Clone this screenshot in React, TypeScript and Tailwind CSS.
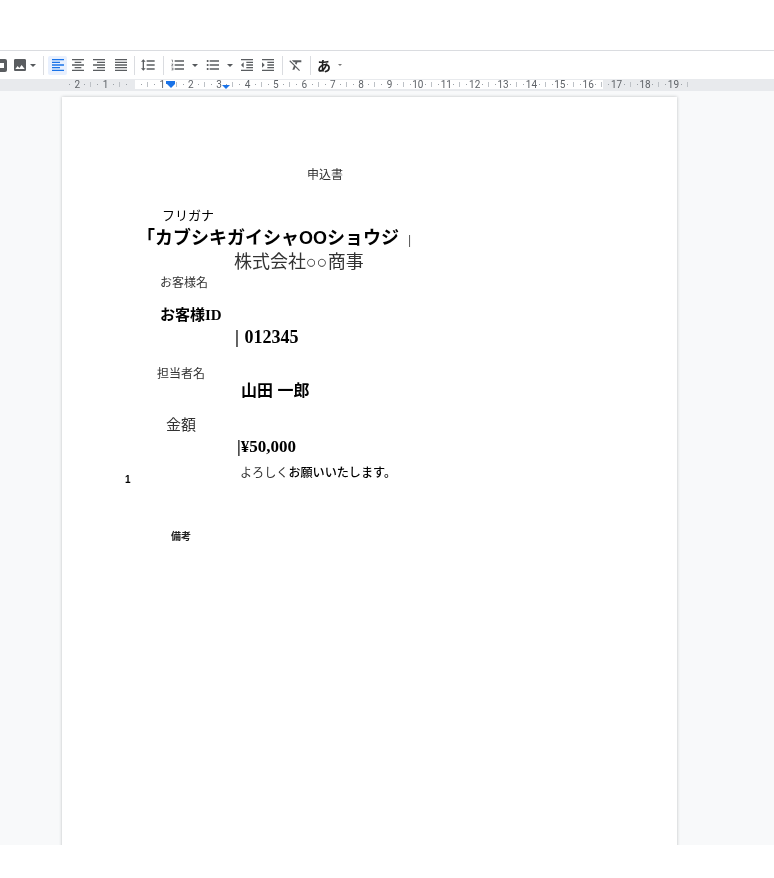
const paths = {
  image:
    "M21 19V5c0-1.1-.9-2-2-2H5c-1.1 0-2 .9-2 2v14c0 1.1.9 2 2 2h14c1.1 0 2-.9 2-2zM8.5 13.5l2.5 3.01L14.5 12l4.5 6H5l3.5-4.5z",
  left: "M15 15H3v2h12v-2zm0-8H3v2h12V7zM3 13h18v-2H3v2zm0 8h18v-2H3v2zM3 3v2h18V3H3z",
  center: "M7 15v2h10v-2H7zm-4 6h18v-2H3v2zm0-8h18v-2H3v2zm4-6v2h10V7H7zM3 3v2h18V3H3z",
  right: "M3 21h18v-2H3v2zm6-4h12v-2H9v2zm-6-4h18v-2H3v2zm6-4h12V7H9v2zM3 3v2h18V3H3z",
  justify: "M3 21h18v-2H3v2zm0-4h18v-2H3v2zm0-4h18v-2H3v2zm0-4h18V7H3v2zm0-6v2h18V3H3z",
  spacing: "M6 7h2.5L5 3.5 1.5 7H4v10H1.5L5 20.5 8.5 17H6V7zm4-2v2h12V5H10zm0 14h12v-2H10v2zm0-6h12v-2H10v2z",
  numbered:
    "M2 17h2v.5H3v1h1v.5H2v1h3v-4H2v1zm1-9h1V4H2v1h1v3zm-1 3h1.8L2 13.1v.9h3v-1H3.2L5 10.9V10H2v1zm5-6v2h14V5H7zm0 14h14v-2H7v2zm0-6h14v-2H7v2z",
  bulleted:
    "M4 10.5c-.83 0-1.5.67-1.5 1.5s.67 1.5 1.5 1.5 1.5-.67 1.5-1.5-.67-1.5-1.5-1.5zm0-6c-.83 0-1.5.67-1.5 1.5S3.17 7.5 4 7.5 5.5 6.83 5.5 6 4.83 4.5 4 4.5zm0 12c-.83 0-1.5.68-1.5 1.5s.68 1.5 1.5 1.5 1.5-.68 1.5-1.5-.67-1.5-1.5-1.5zM7 19h14v-2H7v2zm0-6h14v-2H7v2zm0-8v2h14V5H7z",
  outdent: "M11 17h10v-2H11v2zm-8-5l4 4V8l-4 4zm0 9h18v-2H3v2zM3 3v2h18V3H3zm8 6h10V7H11v2zm0 4h10v-2H11v2z",
  indent: "M3 21h18v-2H3v2zM3 8v8l4-4-4-4zm8 9h10v-2H11v2zM3 3v2h18V3H3zm8 6h10V7H11v2zm0 4h10v-2H11v2z",
  clear: "M3.27 5L2 6.27l6.97 6.97L6.5 19h3l1.57-3.66L16.73 21 18 19.73 3.55 5.27 3.27 5zM6 5v.18L8.82 8h2.4l-.72 1.68 2.1 2.1L14.21 8H20V5H6z",
};

const Icon = ({ d, className = "" }: { d: string; className?: string }) => (
  <svg viewBox="0 0 24 24" className={`h-4 w-4 shrink-0 fill-[#5a5d60] ${className}`}>
    <path d={d} />
  </svg>
);

const Caret = ({ className = "" }: { className?: string }) => (
  <span className={`flex h-4 w-[10px] shrink-0 items-center justify-center ${className}`}>
    <span className="h-0 w-0 border-x-[3px] border-t-[3px] border-x-transparent border-t-[#55585c]" />
  </span>
);

const Sep = ({ className = "" }: { className?: string }) => (
  <span className={`h-[19px] w-px shrink-0 bg-[#dadce0] ${className}`} />
);

const ruler = ["2", "1", "", "1", "2", "3", "4", "5", "6", "7", "8", "9", "10", "11", "12", "13", "14", "15", "16", "17", "18", "19"];

const Toolbar = () => (
  <div className="flex h-[28px] items-center overflow-hidden bg-white blur-[0.4px]">
    <span className="flex h-4 w-[7px] shrink-0 items-center justify-end overflow-hidden">
      <span className="flex h-[13px] w-[13px] shrink-0 items-center justify-center rounded-[2px] bg-[#5a5d60]">
        <span className="h-[5px] w-[7px] bg-white" />
      </span>
    </span>
    <Icon d={paths.image} className="ml-[5px]" />
    <Caret />
    <Sep className="ml-[5px]" />
    <span className="ml-[4px] flex h-[19px] w-[19px] shrink-0 items-center justify-center rounded-[2px] bg-[#e8f0fe]">
      <svg viewBox="0 0 24 24" className="h-4 w-4 fill-[#1a73e8]">
        <path d={paths.left} />
      </svg>
    </span>
    <span className="flex h-4 w-[21px] shrink-0 justify-center"><Icon d={paths.center} /></span>
    <span className="flex h-4 w-[22px] shrink-0 justify-center"><Icon d={paths.right} /></span>
    <span className="flex h-4 w-[21px] shrink-0 justify-center"><Icon d={paths.justify} /></span>
    <Sep className="ml-[3px]" />
    <Icon d={paths.spacing} className="ml-[5px]" />
    <Sep className="ml-[7px]" />
    <Icon d={paths.numbered} className="ml-[6px]" />
    <Caret className="ml-[4px]" />
    <Icon d={paths.bulleted} className="ml-[5px]" />
    <Caret className="ml-[4px]" />
    <Icon d={paths.outdent} className="ml-[4px]" />
    <Icon d={paths.indent} className="ml-[5px]" />
    <Sep className="ml-[6px]" />
    <Icon d={paths.clear} className="ml-[5px]" />
    <Sep className="ml-[6px]" />
    <span className="ml-[5px] w-4 shrink-0 text-center font-['Noto_Sans_CJK_JP',sans-serif] text-[14px] leading-4 font-bold text-[#222]">
      あ
    </span>
    <span className="ml-[3px] flex h-4 w-[10px] shrink-0 items-center justify-center">
      <span className="h-0 w-0 border-x-[2px] border-t-[2px] border-x-transparent border-t-[#777]" />
    </span>
  </div>
);

const Ruler = () => (
  <div className="relative h-[12px] overflow-hidden bg-[#e8eaed] blur-[0.3px]">
    <div className="mt-px flex h-[9px] bg-[linear-gradient(90deg,#e8eaed_135px,#ffffff_135px,#ffffff_603px,#e8eaed_603px)] pl-[63px]">
      {ruler.map((n, i) => (
        <div key={i} className="relative flex w-[28.4px] shrink-0 items-center justify-center text-[10px] leading-[9px] text-[#5f6368]">
          {n}
          <span className="absolute left-[6px] top-[4px] h-px w-px bg-[#9aa0a6]" />
          <span className="absolute right-[6px] top-[4px] h-px w-px bg-[#9aa0a6]" />
          <span className="absolute right-0 top-[2px] h-[5px] w-px bg-[#bdc1c6]" />
        </div>
      ))}
    </div>
    {/* indent markers */}
    <div className="absolute left-[166px] top-[2px] flex flex-col items-center">
      <span className="h-[3px] w-[9px] bg-[#1a73e8]" />
      <span className="h-0 w-0 border-x-[4px] border-t-[4px] border-x-transparent border-t-[#1a73e8]" />
    </div>
    <span className="absolute left-[222px] top-[6px] h-0 w-0 border-x-[4px] border-t-[4px] border-x-transparent border-t-[#1a73e8]" />
  </div>
);

const Page = () => (
  <div className="ml-[62px] mt-[6px] h-[760px] w-[615px] bg-white pt-[68px] shadow-[0_0_3px_rgba(60,64,67,0.3)]">
    <div className="font-['Liberation_Sans','Noto_Sans_CJK_JP',sans-serif] text-[#222] blur-[0.35px]">
      <div className="h-5 pl-[245px] text-[12px] leading-5 text-[#333]">申込書</div>
      <div className="mt-[21px] h-5 pl-[100px] text-[13px] leading-5 text-black">フリガナ</div>
      <div className="mt-px h-[22px] pl-[75px] text-[18px] leading-[22px] font-bold text-black">
        「カブシキガイシャOOショウジ <span className="ml-[4px] text-[12px] font-normal text-[#555]">|</span>
      </div>
      <div className="h-[26px] pl-[172px] text-[18px] leading-[26px] text-[#333]">株式会社○○商事</div>
      <div className="h-4 pl-[98px] text-[12px] leading-4 text-[#333]">お客様名</div>
      <div className="mt-[14px] h-5 pl-[98px] text-[15px] leading-5 font-bold text-black">
        お客様<span className="font-['Liberation_Serif',serif]">ID</span>
      </div>
      <div className="h-6 pl-[173px] font-['Liberation_Serif',serif] text-[18px] leading-6 font-bold text-black">
        | <span className="ml-px">012345</span>
      </div>
      <div className="mt-[15px] h-5 pl-[95px] text-[12px] leading-5 text-[#333]">担当者名</div>
      <div className="-mt-px h-4 pl-[179px] text-[16px] leading-4 font-bold text-black">山田 一郎</div>
      <div className="mt-[16px] h-5 pl-[104px] text-[15px] leading-5 text-[#333]">金額</div>
      <div className="mt-[2px] h-5 pl-[175px] font-['Liberation_Serif',serif] text-[17px] leading-5 font-bold text-black">|¥50,000</div>
      <div className="mt-[7px] flex h-[22px] pl-[63px]">
        <span className="w-[115px] self-end text-[10px] leading-3 font-bold text-black">1</span>
        <span className="pt-px text-[12.1px] leading-4 text-[#333]">
          よろしく<span className="font-medium text-black">お願いいたします。</span>
        </span>
      </div>
      <div className="mt-[44px] h-[14px] pl-[109px] text-[10px] leading-[14px] font-bold text-[#222]">備考</div>
    </div>
  </div>
);

export default function App() {
  return (
    <div className="h-[878px] w-[774px] overflow-hidden bg-white font-['Roboto',sans-serif]">
      <div className="h-[51px] border-b border-[#dadce0]" />
      <Toolbar />
      <Ruler />
      <div className="h-[754px] overflow-hidden bg-[#f8f9fa]">
        <Page />
      </div>
    </div>
  );
}
